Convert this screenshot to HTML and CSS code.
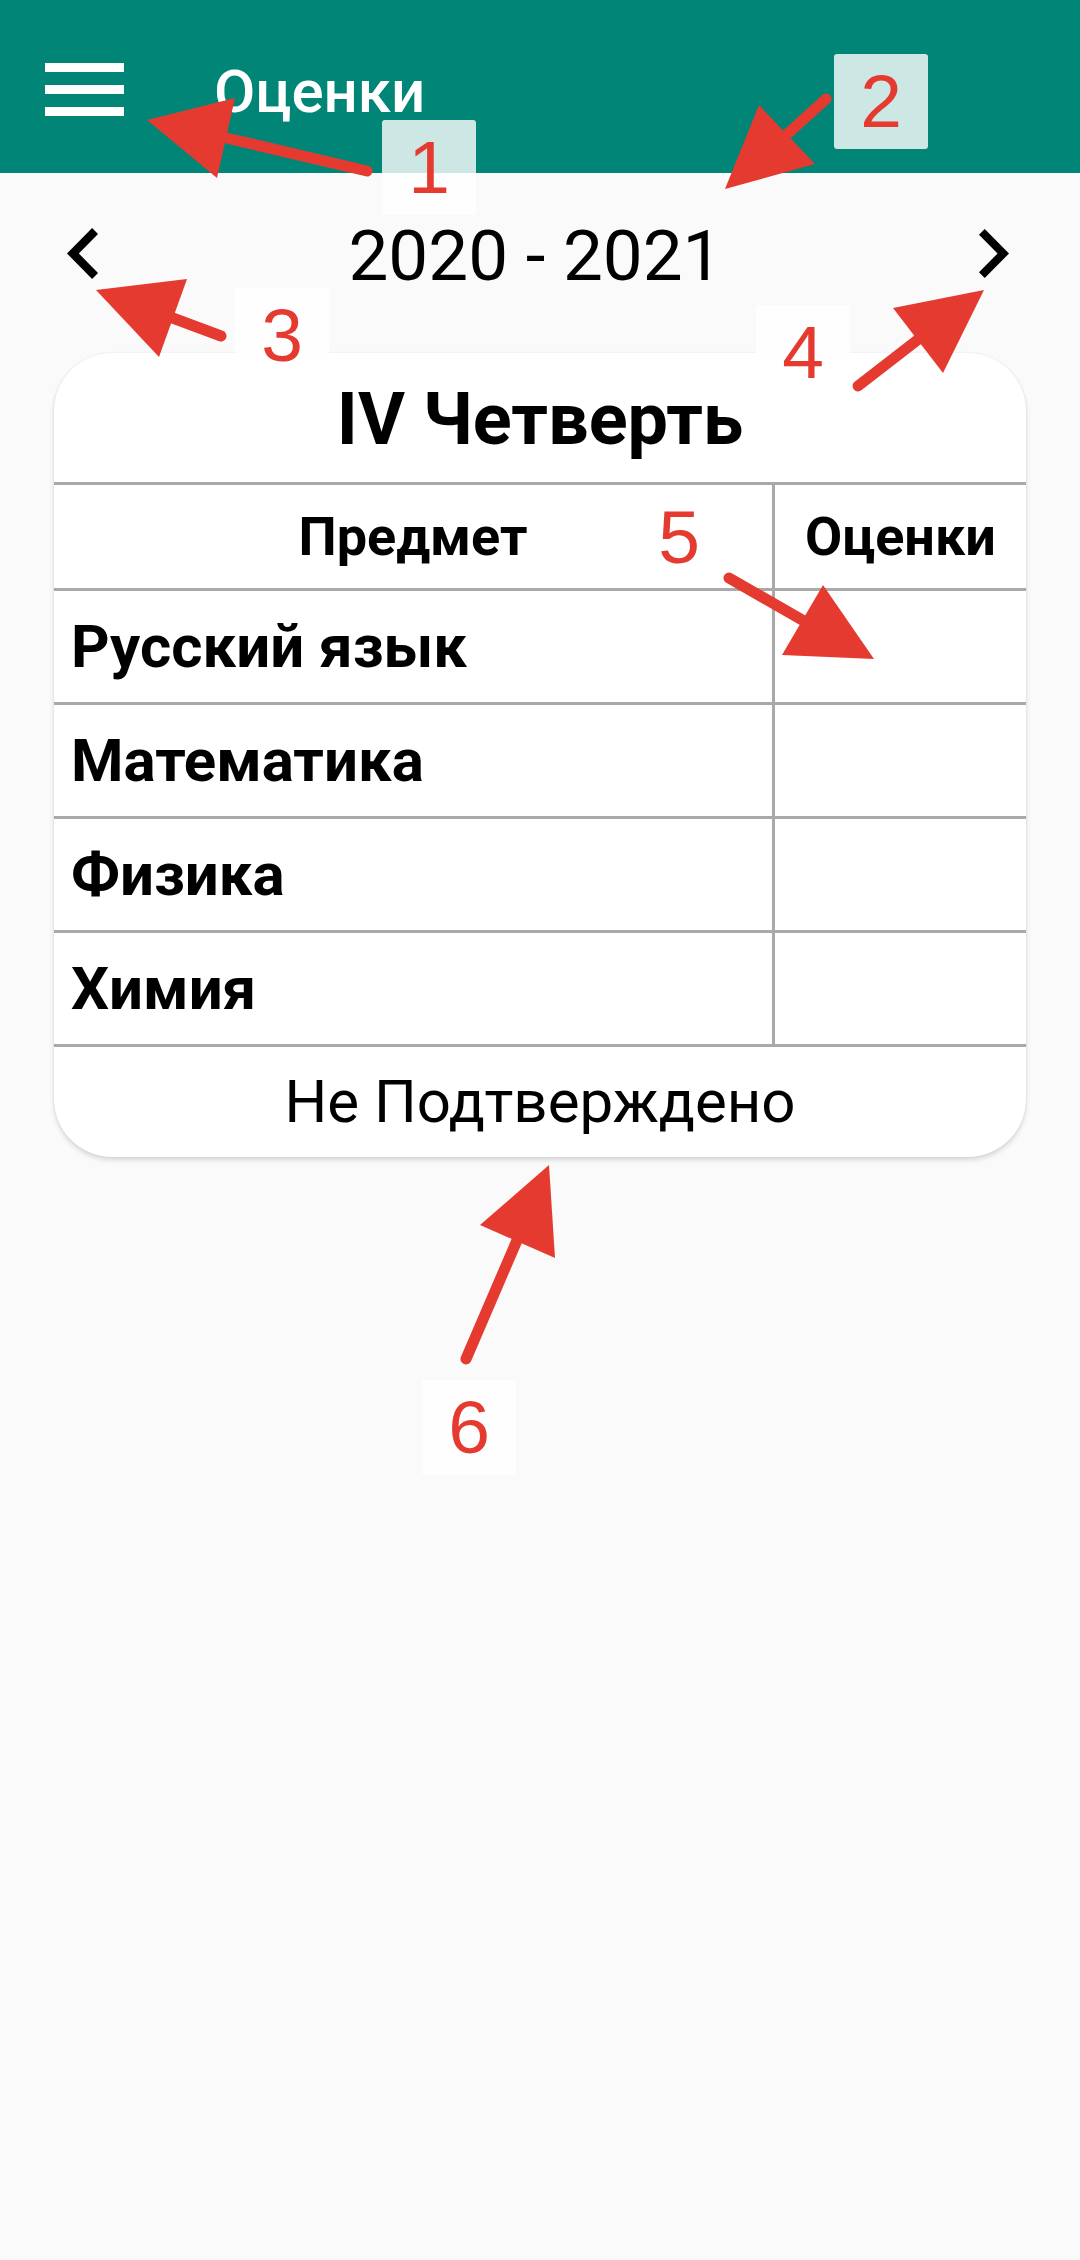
FILE: index.html
```html
<!DOCTYPE html>
<html lang="ru">
<head>
<meta charset="utf-8">
<title>Оценки</title>
<link rel="stylesheet" href="styles.css">
</head>
<body>
<div class="page">
  <header class="appbar">
    <button class="menu-btn" aria-label="Меню">
      <span class="bar"></span><span class="bar"></span><span class="bar"></span>
    </button>
    <h1 class="appbar-title">Оценки</h1>
  </header>

  <nav class="year-nav">
    <button class="nav-btn nav-prev" aria-label="Назад">
      <svg width="31" height="51" viewBox="8 6 7.41 12" preserveAspectRatio="none"><path d="M15.41 7.41L14 6l-6 6 6 6 1.41-1.41L10.83 12z" fill="#000"/></svg>
    </button>
    <div class="year">2020 - 2021</div>
    <button class="nav-btn nav-next" aria-label="Вперёд">
      <svg width="30" height="49" viewBox="8.59 6 7.41 12" preserveAspectRatio="none"><path d="M10 6L8.59 7.41 13.17 12l-4.58 4.59L10 18l6-6z" fill="#000"/></svg>
    </button>
  </nav>

  <section class="card">
    <div class="card-title">IV Четверть</div>
    <div class="grades">
      <div class="row head">
        <div class="cell subj th">Предмет</div>
        <div class="cell mark th">Оценки</div>
      </div>
      <div class="row">
        <div class="cell subj">Русский язык</div>
        <div class="cell mark"></div>
      </div>
      <div class="row">
        <div class="cell subj">Математика</div>
        <div class="cell mark"></div>
      </div>
      <div class="row">
        <div class="cell subj">Физика</div>
        <div class="cell mark"></div>
      </div>
      <div class="row">
        <div class="cell subj">Химия</div>
        <div class="cell mark"></div>
      </div>
    </div>
    <div class="card-footer">Не Подтверждено</div>
  </section>
</div>

<svg class="annotations" width="1080" height="2260" viewBox="0 0 1080 2260">
  <g stroke="#e53a2f" stroke-width="11" stroke-linecap="round" fill="none">
    <line x1="367" y1="171" x2="222" y2="137"/>
    <line x1="826" y1="99" x2="784" y2="137"/>
    <line x1="221" y1="336" x2="170" y2="317"/>
    <line x1="858" y1="386" x2="920" y2="338"/>
    <line x1="729" y1="578" x2="804" y2="621"/>
    <line x1="466" y1="1359" x2="518" y2="1238"/>
  </g>
  <g fill="#e53a2f">
    <polygon points="147,120 235,98 217,178"/>
    <polygon points="725,189 759,105 815,164"/>
    <polygon points="96,290 187,279 159,357"/>
    <polygon points="984,290 893,308 943,373"/>
    <polygon points="874,659 823,585 782,655"/>
    <polygon points="549,1165 480,1225 555,1258"/>
  </g>
</svg>
<div class="label l1">1</div>
<div class="label l2">2</div>
<div class="label l3">3</div>
<div class="label l4">4</div>
<div class="label l5">5</div>
<div class="label l6">6</div>
</body>
</html>
```

FILE: styles.css
```css
html, body {
  margin: 0;
  padding: 0;
}
body {
  width: 1080px;
  height: 2260px;
  background: #fafafa;
  font-family: Roboto, "Noto Sans", "Liberation Sans", sans-serif;
  color: #000;
  position: relative;
  overflow: hidden;
}
button {
  border: 0;
  background: transparent;
  padding: 0;
  margin: 0;
}

.appbar {
  height: 173px;
  background: #008577;
  display: flex;
  align-items: center;
  padding-left: 45px;
  box-sizing: border-box;
}
.menu-btn {
  width: 79px;
  display: flex;
  flex-direction: column;
  gap: 13px;
  margin-top: 6px;
}
.menu-btn .bar {
  display: block;
  height: 9px;
  width: 79px;
  background: #fff;
}
.appbar-title {
  margin: 0 0 0 90px;
  font-size: 60px;
  font-weight: 500;
  color: #fff;
  line-height: 1;
  padding-top: 10px;
}

.year-nav {
  height: 160px;
  display: flex;
  align-items: center;
  padding: 0 36px 0 31px;
  box-sizing: border-box;
}
.nav-btn {
  width: 100px;
  height: 100px;
  display: flex;
  align-items: center;
  justify-content: center;
}
.nav-btn svg {
  display: block;
}
.nav-prev svg { margin-left: 2px; margin-top: 1px; }
.nav-next svg { margin-left: 0; }
.year {
  flex: 1;
  text-align: center;
  font-size: 71px;
  line-height: 1;
  font-weight: 400;
  margin-right: 4px;
  padding-top: 4px;
}

.card {
  margin: 20px 54px 0 54px;
  background: #fff;
  border-radius: 58px;
  box-shadow: 0 3px 5px rgba(0,0,0,0.14), 0 0 2px rgba(0,0,0,0.08);
  overflow: hidden;
}
.card-title {
  height: 129px;
  display: flex;
  align-items: center;
  justify-content: center;
  font-size: 72px;
  font-weight: 700;
  line-height: 1;
  padding-top: 4px;
  box-sizing: border-box;
}
.row {
  display: grid;
  grid-template-columns: 721px 1fr;
  height: 114px;
  border-top: 3px solid #a9a9a9;
  box-sizing: border-box;
}
.row.head {
  height: 106px;
}
.cell {
  display: flex;
  align-items: center;
  font-weight: 700;
  line-height: 1;
}
.cell.subj {
  font-size: 60px;
  padding-left: 17px;
  border-right: 3px solid #a9a9a9;
}
.cell.th {
  font-size: 54px;
  justify-content: center;
  padding-left: 0;
}
.card-footer {
  height: 113px;
  border-top: 3px solid #a9a9a9;
  box-sizing: border-box;
  display: flex;
  align-items: center;
  justify-content: center;
  font-size: 60px;
  line-height: 1;
  font-weight: 400;
}

.annotations {
  position: absolute;
  left: 0;
  top: 0;
  pointer-events: none;
}
.label {
  position: absolute;
  width: 94px;
  height: 95px;
  background: rgba(255,255,255,0.8);
  border-radius: 3px;
  color: #e53a2f;
  font-family: "Liberation Sans", Arial, sans-serif;
  font-size: 75px;
  line-height: 95px;
  text-align: center;
}
.l1 { left: 382px; top: 120px; }
.l2 { left: 834px; top: 54px; }
.l3 { left: 235px; top: 288px; }
.l4 { left: 756px; top: 305px; }
.l5 { left: 632px; top: 490px; background: transparent; }
.l6 { left: 422px; top: 1380px; }
```
